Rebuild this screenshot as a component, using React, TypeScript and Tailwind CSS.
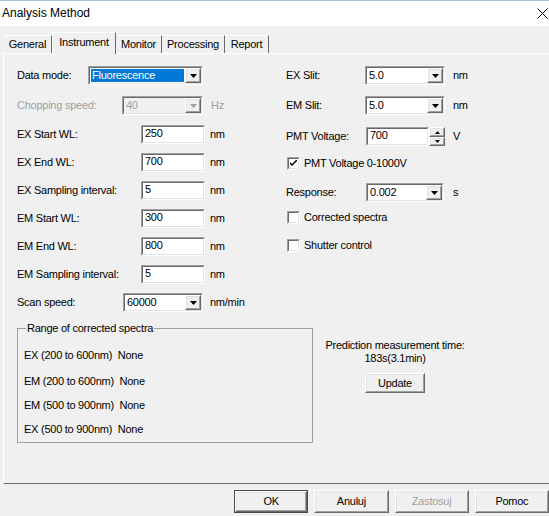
import type { ReactNode } from 'react'

// Classic Win32 dialog pieces

function Arrow({ disabled = false, up = false }: { disabled?: boolean; up?: boolean }) {
  return (
    <svg width="7" height="4" viewBox="0 0 7 4">
      <path d={up ? 'M0 4h7L3.5 0z' : 'M0 0h7L3.5 4z'} fill={disabled ? '#a0a0a0' : '#000'} />
    </svg>
  )
}

function Sunken({ className = '', inner = 'bg-white', children }: { className?: string; inner?: string; children?: ReactNode }) {
  return (
    <div className={`border border-t-[#a0a0a0] border-l-[#a0a0a0] border-r-white border-b-white ${className}`}>
      <div className={`h-full flex border border-t-[#696969] border-l-[#696969] border-r-[#e3e3e3] border-b-[#e3e3e3] ${inner}`}>
        {children}
      </div>
    </div>
  )
}

function Raised({ className = '', children }: { className?: string; children?: ReactNode }) {
  return (
    <div className={`border border-t-white border-l-white border-r-[#696969] border-b-[#696969] ${className}`}>
      <div className="h-full flex items-center justify-center border border-t-[#e3e3e3] border-l-[#e3e3e3] border-r-[#a0a0a0] border-b-[#a0a0a0] bg-[#f0f0f0]">
        {children}
      </div>
    </div>
  )
}

function Edit({ value, className = 'w-[64px]' }: { value: string; className?: string }) {
  return (
    <Sunken className={`h-[19px] ${className}`}>
      <span className="pl-[2px] leading-[13px]">{value}</span>
    </Sunken>
  )
}

function Combo({
  value,
  className,
  selected = false,
  disabled = false,
}: {
  value: string
  className: string
  selected?: boolean
  disabled?: boolean
}) {
  return (
    <Sunken className={`h-[19px] ${className}`} inner={disabled ? 'bg-[#f0f0f0]' : 'bg-white'}>
      <div className="flex-1 p-[1px]">
        <div
          className={`h-full leading-[13px] px-[1px] ${
            selected ? 'bg-[#0078d7] text-white' : disabled ? 'text-[#a0a0a0]' : ''
          }`}
        >
          {value}
        </div>
      </div>
      <Raised className="w-[16px] h-full">
        <Arrow disabled={disabled} />
      </Raised>
    </Sunken>
  )
}

function Check({ checked = false }: { checked?: boolean }) {
  return (
    <Sunken className="w-[13px] h-[13px]">
      <div className="flex-1 flex items-center justify-center">
        {checked && (
          <svg width="7" height="7" viewBox="0 0 7 7">
            <path d="M0 2l2 2 5-5v2L2 6 0 4z" fill="#000" />
          </svg>
        )}
      </div>
    </Sunken>
  )
}

function Button({ children, className = 'w-[76px] h-[23px]', isDefault = false, disabled = false }: { children: ReactNode; className?: string; isDefault?: boolean; disabled?: boolean }) {
  const label = <span className={disabled ? 'text-[#a0a0a0]' : ''}>{children}</span>
  if (isDefault) {
    return (
      <div className={`border border-[#4a4a4a] ${className}`}>
        <Raised className="h-full">{label}</Raised>
      </div>
    )
  }
  return <Raised className={className}>{label}</Raised>
}

const tabs = [
  { name: 'General', w: 'w-[48px]' },
  { name: 'Instrument', w: 'w-[64px]' },
  { name: 'Monitor', w: 'w-[46px]' },
  { name: 'Processing', w: 'w-[63px]' },
  { name: 'Report', w: 'w-[44px]' },
]

const spectra = [
  { label: 'EX (200 to 600nm)', mt: 'mt-[8px]' },
  { label: 'EM (200 to 600nm)', mt: 'mt-[2px]' },
  { label: 'EM (500 to 900nm)', mt: 'mt-0' },
  { label: 'EX (500 to 900nm)', mt: 'mt-0' },
]

export default function App() {
  return (
    <div className="w-[549px] h-[516px] overflow-hidden bg-[#f0f0f0] flex flex-col font-['Liberation_Sans',Arial,sans-serif] text-[11px] tracking-[-0.25px] text-black">
      {/* title bar */}
      <div className="h-[26px] shrink-0 bg-white border-t border-[#aac8e6] flex items-center justify-between pl-[2px] pr-[1px] pb-[1px]">
        <span className="text-[12px] tracking-normal">Analysis Method</span>
        <svg width="11" height="11" viewBox="0 0 11 11">
          <path d="M0.5 0.5l10 10M10.5 0.5l-10 10" stroke="#000" strokeWidth="1" />
        </svg>
      </div>

      {/* tabs */}
      <div className="h-[27px] shrink-0 flex items-end pl-[4px]">
        {tabs.map((t) =>
          t.name === 'Instrument' ? (
            <div
              key={t.name}
              className={`${t.w} h-[22px] mb-[-1px] relative z-10 bg-[#f0f0f0] border-t border-l border-r border-t-white border-l-white border-r-[#696969] flex items-center justify-center pb-[2px]`}
            >
              {t.name}
            </div>
          ) : (
            <div
              key={t.name}
              className={`${t.w} h-[18px] border-t border-r border-t-white border-r-[#696969] flex items-center justify-center`}
            >
              {t.name}
            </div>
          )
        )}
      </div>

      {/* tab panel */}
      <div className="ml-[3px] w-[560px] h-[431px] shrink-0 border border-t-white border-l-white border-r-[#696969] border-b-[#696969]">
        <div className="flex pl-[13px] pt-[12px]">
          {/* left column */}
          <div className="w-[269px] flex flex-col">
            <div className="flex items-center h-[19px]">
              <span className="w-[71px]">Data mode:</span>
              <Combo value="Fluorescence" className="w-[115px]" selected />
            </div>
            <div className="mt-[11px] flex items-center h-[19px] text-[#a0a0a0]">
              <span className="w-[105px]">Chopping speed:</span>
              <Combo value="40" className="w-[81px]" disabled />
              <span className="ml-[8px]">Hz</span>
            </div>
            {[
              ['EX Start WL:', '250', 'mt-[10px]'],
              ['EX End WL:', '700', 'mt-[9px]'],
              ['EX Sampling interval:', '5', 'mt-[9px]'],
              ['EM Start WL:', '300', 'mt-[9px]'],
              ['EM End WL:', '800', 'mt-[9px]'],
              ['EM Sampling interval:', '5', 'mt-[9px]'],
            ].map(([label, value, mt]) => (
              <div key={label} className={`${mt} flex items-center h-[19px]`}>
                <span className="w-[124px]">{label}</span>
                <Edit value={value} />
                <span className="ml-[5px]">nm</span>
              </div>
            ))}
            <div className="mt-[9px] flex items-center h-[19px]">
              <span className="w-[106px]">Scan speed:</span>
              <Combo value="60000" className="w-[80px]" />
              <span className="ml-[7px]">nm/min</span>
            </div>
          </div>

          {/* right column */}
          <div className="flex flex-col">
            <div className="flex items-center h-[19px]">
              <span className="w-[79px]">EX Slit:</span>
              <Combo value="5.0" className="w-[80px]" />
              <span className="ml-[8px]">nm</span>
            </div>
            <div className="mt-[11px] flex items-center h-[19px]">
              <span className="w-[79px]">EM Slit:</span>
              <Combo value="5.0" className="w-[80px]" />
              <span className="ml-[8px]">nm</span>
            </div>
            <div className="mt-[12px] flex items-center h-[19px]">
              <span className="w-[80px]">PMT Voltage:</span>
              <Edit value="700" className="w-[63px]" />
              <div className="w-[16px] h-[19px] flex flex-col">
                <Raised className="h-[10px]">
                  <svg width="5" height="3" viewBox="0 0 5 3"><path d="M0 3h5L2.5 0z" fill="#000" /></svg>
                </Raised>
                <Raised className="h-[9px]">
                  <svg width="5" height="3" viewBox="0 0 5 3"><path d="M0 0h5L2.5 3z" fill="#000" /></svg>
                </Raised>
              </div>
              <span className="ml-[8px]">V</span>
            </div>
            <div className="mt-[8px] flex items-center h-[19px] pl-[1px]">
              <Check checked />
              <span className="ml-[4px]">PMT Voltage 0-1000V</span>
            </div>
            <div className="mt-[10px] flex items-center h-[19px]">
              <span className="w-[80px]">Response:</span>
              <Combo value="0.002" className="w-[78px]" />
              <span className="ml-[9px]">s</span>
            </div>
            <div className="mt-[6px] flex items-center h-[19px] pl-[1px]">
              <Check />
              <span className="ml-[4px]">Corrected spectra</span>
            </div>
            <div className="mt-[9px] flex items-center h-[19px] pl-[1px]">
              <Check />
              <span className="ml-[4px]">Shutter control</span>
            </div>
          </div>
        </div>

        {/* bottom section */}
        <div className="flex pl-[13px] mt-[10px]">
          <fieldset className="w-[296px] h-[121px] border border-[#a0a0a0]">
            <legend className="ml-[8px] px-[1px] leading-[13px]">Range of corrected spectra</legend>
            <div className="pl-[6px] flex flex-col">
              {spectra.map((s) => (
                <div key={s.label} className={`${s.mt} h-[24px] leading-[24px] whitespace-pre`}>
                  {s.label}  None
                </div>
              ))}
            </div>
          </fieldset>
          <div className="w-[164px] flex flex-col items-center pt-[17px]">
            <div className="leading-[13px] text-center">
              Prediction measurement time:
              <br />
              183s(3.1min)
            </div>
            <Button className="mt-[8px] w-[60px] h-[20px]">Update</Button>
          </div>
        </div>
      </div>

      {/* dialog buttons */}
      <div className="flex gap-[6px] pl-[234px] mt-[6px]">
        <Button isDefault>OK</Button>
        <Button>Anuluj</Button>
        <Button disabled>Zastosuj</Button>
        <Button>Pomoc</Button>
      </div>
    </div>
  )
}
